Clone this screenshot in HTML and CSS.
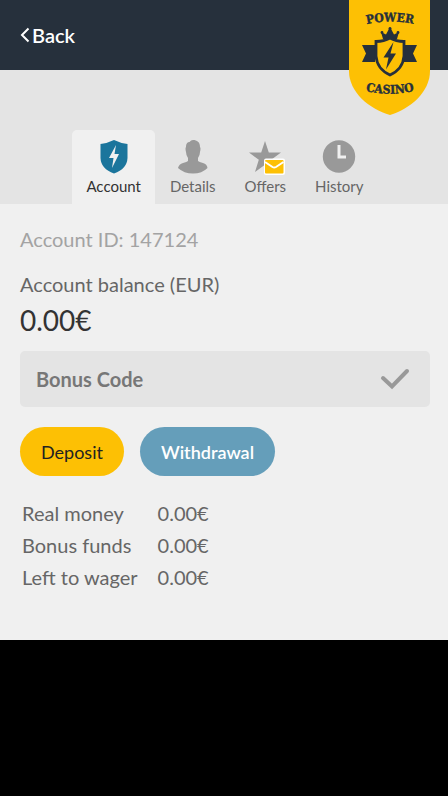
FILE: index.html
```html
<!DOCTYPE html>
<html lang="en">
<head>
<meta charset="utf-8">
<meta name="viewport" content="width=device-width, initial-scale=1">
<title>Power Casino – Account</title>
<link rel="stylesheet" href="styles.css">
</head>
<body>
<div class="app">
  <header class="header">
    <a class="back" href="#">
      <svg class="back-icon" viewBox="0 0 10 16" aria-hidden="true"><path d="M8.500 1.500L2 8l6.500 6.500"/></svg>
      Back
    </a>
    <a class="logo" href="#" aria-label="Power Casino">
      <svg viewBox="0 0 81 115">
        <path fill="#fdc004" d="M0 0H81V71C81 92 61 109 41 115C20 109 0 92 0 71Z"/>
        <path id="arc-top" fill="none" d="M10 26Q41 17 72 26"/>
        <path id="arc-bottom" fill="none" d="M10 89Q41 98.500 72 89"/>
        <text class="logo-text" text-anchor="middle"><textPath href="#arc-top" startOffset="50%">POWER</textPath></text>
        <text class="logo-text" text-anchor="middle"><textPath href="#arc-bottom" startOffset="50%">CASINO</textPath></text>
        <path fill="#26303c" d="M13 45H26V62H13L17 53.500ZM68 45H55V62H68L64 53.500Z"/>
        <path fill="#26303c" d="M34 39L32 32L37 34.500L41 27L45 34.500L50 32L48 39Z"/>
        <circle cx="33" cy="32.500" r="1.400" fill="#26303c"/><circle cx="41" cy="28.500" r="1.500" fill="#26303c"/><circle cx="49" cy="32.500" r="1.400" fill="#26303c"/>
        <path fill="#fdc004" stroke="#26303c" stroke-width="2.800" d="M27 41.500Q35 41.500 41 38Q47 41.500 55 41.500V56Q54 69 41 75Q28 69 27 56Z"/>
        <path fill="#26303c" d="M44.500 42L34.500 57.500H39.500L37 69.500L47 53.500H41.500Z"/>
      </svg>
    </a>
  </header>

  <nav class="tabs">
    <a class="tab tab-active" href="#" aria-current="page">
      <svg class="tab-icon" viewBox="0 0 34 34" aria-hidden="true"><path fill="#1b759c" d="M3.500 4Q11 3 17 0Q23 3 30.500 4V18Q30 29 17 33.500Q4 29 3.500 18Z"/><path fill="#f0f0f0" d="M19 5L12 18H16.500L15 28L22 14H17.500Z"/></svg>
      Account
    </a>
    <a class="tab" href="#">
      <svg class="tab-icon" viewBox="0 0 34 34" aria-hidden="true"><path fill="#999" d="M17 0C21 0 24 2 24 7Q25 8 24 12Q24 15 22 18V21Q23 22 27 23Q31 24 31.500 28Q26 33.500 17 33.500Q8 33.500 2 28Q3 24 7 23Q11 22 12 21V18Q10 15 10 12Q9 8 10 7C10 3 12 2 13.500 2Q15 0 17 0Z"/></svg>
      Details
    </a>
    <a class="tab" href="#">
      <svg class="tab-icon" viewBox="0 0 34 34" aria-hidden="true"><path fill="#999" d="M17 1L20.800 12.500H33L23.200 19.800L27 32L17 24.700L7 32L10.800 19.800L1 12.500H13.200Z"/><rect x="16" y="18.500" width="21" height="16.500" rx="2" fill="#fff"/><rect x="17" y="20" width="18.500" height="13.500" rx="1" fill="#fdc004"/><path d="M17 22L24.500 27Q26.200 28 28 27L35.500 22" fill="none" stroke="#fff" stroke-width="2"/></svg>
      Offers
    </a>
    <a class="tab" href="#">
      <svg class="tab-icon" viewBox="0 0 34 34" aria-hidden="true"><circle cx="17" cy="16.500" r="16.200" fill="#999"/><path d="M17 5V17H24" fill="none" stroke="#f0f0f0" stroke-width="3"/></svg>
      History
    </a>
  </nav>

  <main class="content">
    <p class="account-id">Account ID: 147124</p>
    <p class="balance-label">Account balance (EUR)</p>
    <p class="balance">0.00€</p>
    <form class="bonus">
      <input class="bonus-input" type="text" placeholder="Bonus Code" aria-label="Bonus Code">
      <button class="bonus-submit" type="button" aria-label="Apply bonus code">
        <svg viewBox="0 0 28 20" aria-hidden="true"><path d="M2 9L11 17.500L26 2"/></svg>
      </button>
    </form>
    <div class="actions">
      <button class="button deposit" type="button">Deposit</button>
      <button class="button withdrawal" type="button">Withdrawal</button>
    </div>
    <table class="funds">
      <tr><th scope="row">Real money</th><td>0.00€</td></tr>
      <tr><th scope="row">Bonus funds</th><td>0.00€</td></tr>
      <tr><th scope="row">Left to wager</th><td>0.00€</td></tr>
    </table>
  </main>
</div>
</body>
</html>
```
FILE: styles.css
```css
* {
  box-sizing: border-box;
}

body {
  margin: 0;
  background: #000;
  color: #666;
  font: 20px/24px Lato, "Liberation Sans", sans-serif;
}

p {
  margin: 0;
}

a {
  color: inherit;
  text-decoration: none;
}

svg {
  display: block;
  overflow: visible;
}

button,
input {
  border: 0;
  font: inherit;
}

.app {
  background: #f0f0f0;
}

.header {
  position: relative;
  display: flex;
  align-items: center;
  height: 70px;
  padding: 0 20px;
  background: #26303c;
}

.back {
  display: flex;
  align-items: center;
  gap: 2px;
  color: #fff;
  font-weight: 600;
}

.back-icon {
  width: 10px;
  height: 16px;
  fill: none;
  stroke: #fff;
  stroke-width: 2;
}

.logo {
  position: absolute;
  top: 0;
  right: 18px;
  width: 81px;
}

.logo-text {
  fill: #26303c;
  font: bold 12px "DejaVu Serif Condensed", "DejaVu Serif", serif;
  stroke: #26303c;
  stroke-width: 0.4px;
}

.tabs {
  display: flex;
  justify-content: center;
  gap: 1px;
  padding: 60px 0 0 2px;
  background: #e4e4e4;
}

.tab {
  display: flex;
  flex-direction: column;
  align-items: center;
  gap: 3px;
  padding: 10px 14px 9px;
  border-radius: 5px 5px 0 0;
  font-size: 15px;
  line-height: 18px;
}

.tab-active {
  background: #f0f0f0;
  color: #333;
}

.tab-icon {
  width: 34px;
  height: 34px;
}

.content {
  padding: 23px 18px 47px 20px;
}

.account-id {
  color: #a3a3a3;
}

.balance-label {
  margin-top: 21px;
}

.balance {
  margin-top: 6px;
  color: #333;
  font-size: 28px;
  line-height: 36px;
}

.bonus {
  display: flex;
  align-items: center;
  height: 56px;
  margin-top: 13px;
  border-radius: 5px;
  background: #e4e4e4;
}

.bonus-input {
  flex: 1;
  min-width: 0;
  height: 56px;
  padding: 0 16px;
  background: none;
  color: #666;
  font-weight: 700;
}

.bonus-input::placeholder {
  color: #777;
  opacity: 1;
}

.bonus-submit {
  padding: 8px 21px;
  background: none;
}

.bonus-submit svg {
  width: 28px;
  height: 20px;
  fill: none;
  stroke: #999;
  stroke-width: 4;
  stroke-linecap: round;
}

.actions {
  display: flex;
  gap: 16px;
  margin-top: 20px;
}

.button {
  height: 49px;
  padding: 0 21px;
  border-radius: 25px;
  font-size: 18px;
}

.deposit {
  background: #fdc004;
  color: #222;
}

.withdrawal {
  background: #659eba;
  color: #fff;
  font-weight: 600;
}

.funds {
  margin-top: 21px;
  border-collapse: collapse;
}

.funds th,
.funds td {
  padding: 4px 2px;
  font-weight: 400;
  text-align: left;
}

.funds td {
  padding-left: 18px;
}
```
